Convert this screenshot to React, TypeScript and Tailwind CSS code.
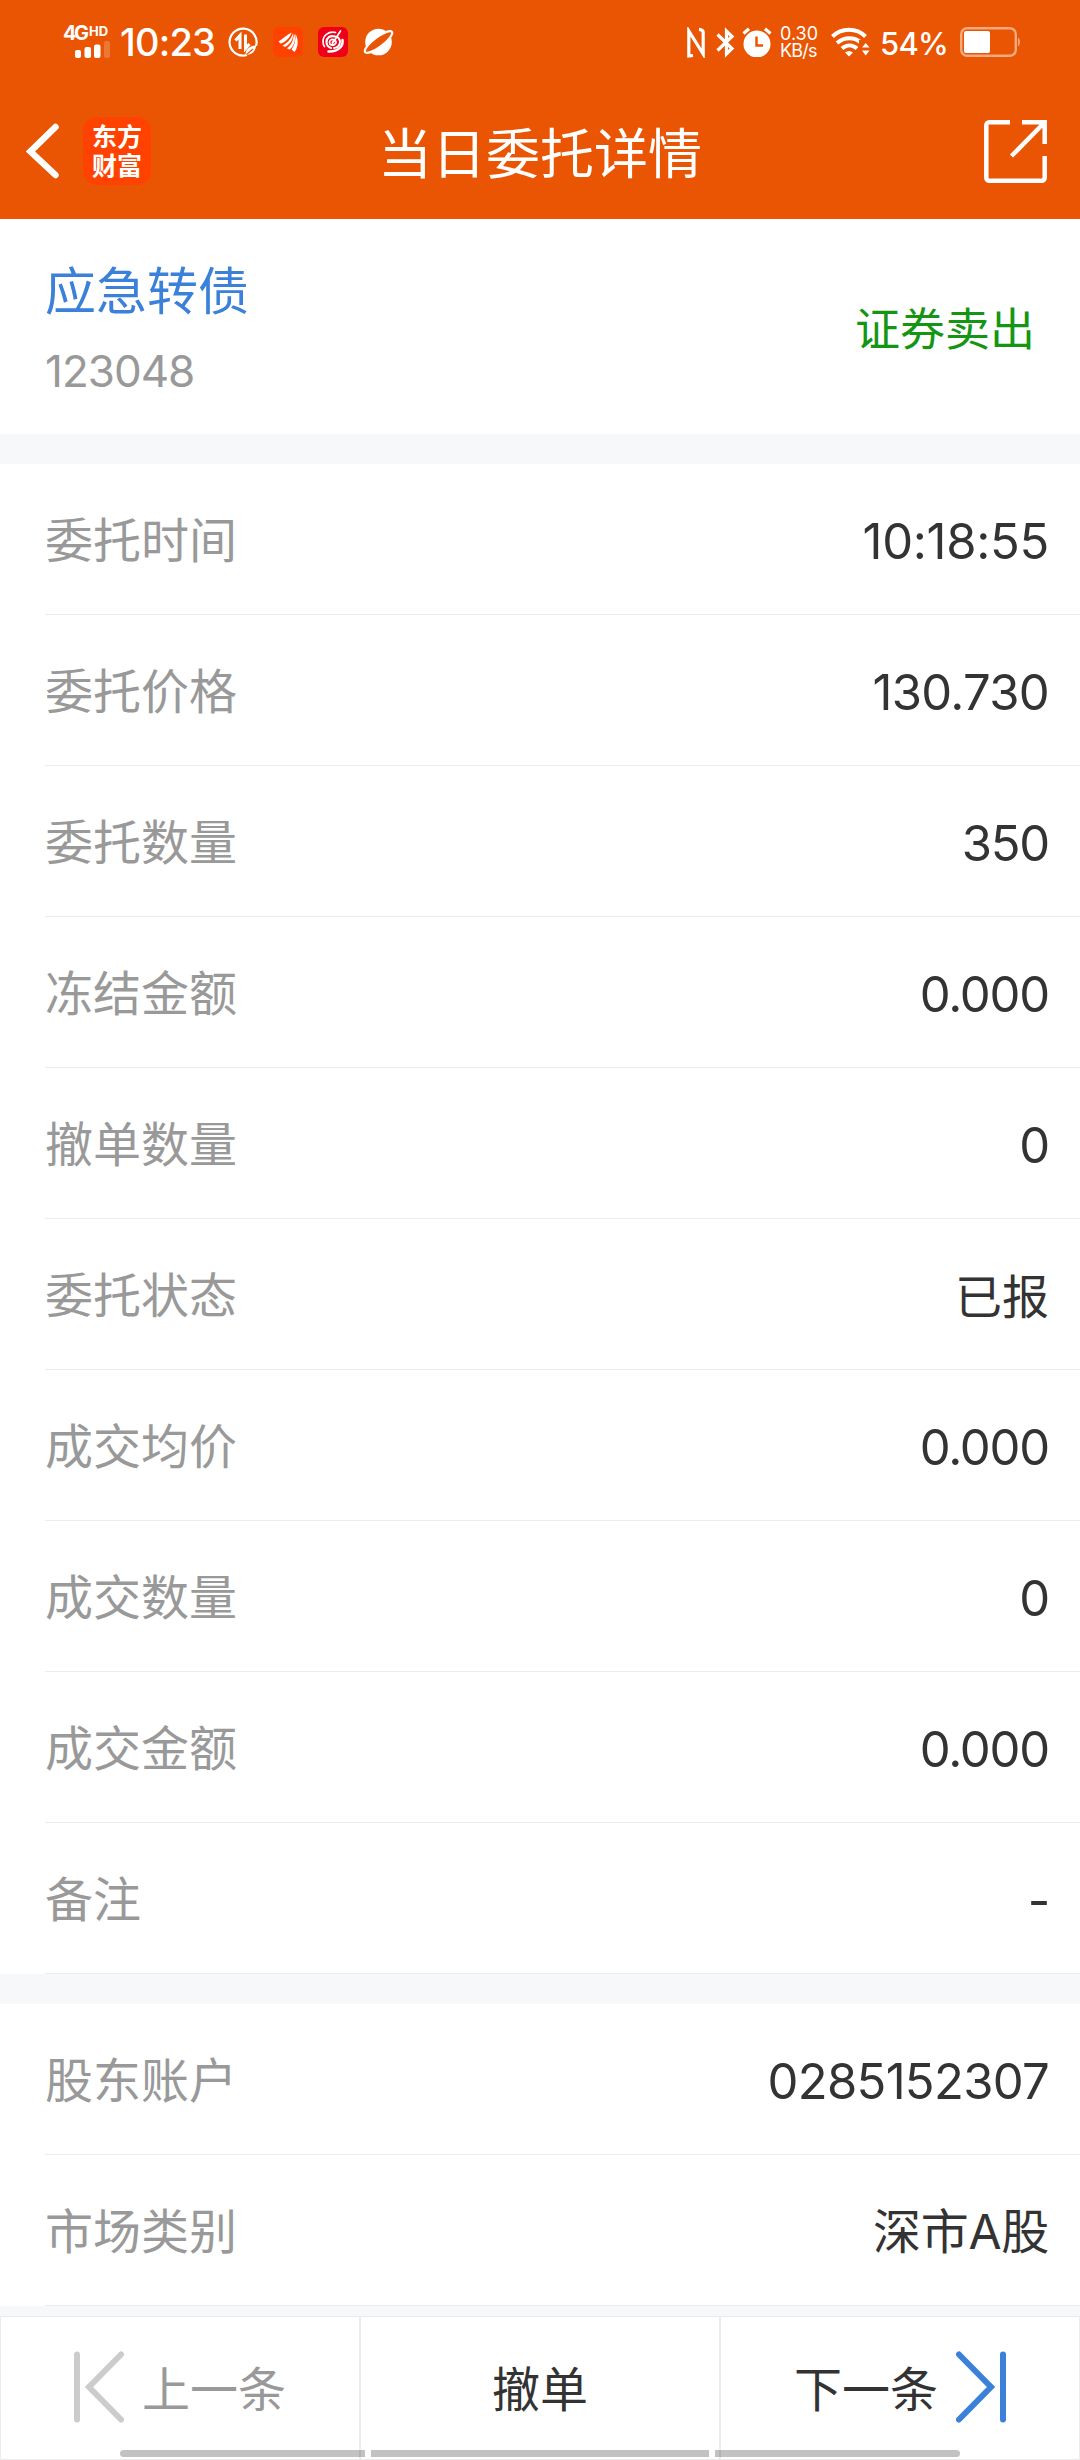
import { clsx } from "clsx";

type Row = { label: string; value: string; valueClass?: string };

const ORDER_ROWS: Row[] = [
  { label: "委托时间", value: "10:18:55", valueClass: "text-[49px] tracking-[-0.3px]" },
  { label: "委托价格", value: "130.730", valueClass: "text-[49px] tracking-[-0.7px]" },
  { label: "委托数量", value: "350" },
  { label: "冻结金额", value: "0.000" },
  { label: "撤单数量", value: "0" },
  { label: "委托状态", value: "已报", valueClass: "text-[47px]" },
  { label: "成交均价", value: "0.000" },
  { label: "成交数量", value: "0" },
  { label: "成交金额", value: "0.000" },
  { label: "备注", value: "-" },
];

const ACCOUNT_ROWS: Row[] = [
  { label: "股东账户", value: "0285152307", valueClass: "text-[49px] tracking-[-0.7px]" },
  { label: "市场类别", value: "深市A股", valueClass: "text-[48px] tracking-[-0.3px]" },
];

function SignalIcon() {
  return (
    <div className="flex w-[48px] flex-col text-white">
      <div className="flex h-[15px] items-start leading-none font-bold">
        <span className="w-[26px] text-[20px] leading-[15px] tracking-[-2.5px]">4G</span>
        <span className="text-[13px] leading-[11px]">HD</span>
      </div>
      <svg width="48" height="17" viewBox="0 0 48 17" fill="#fff">
        <rect x="12" y="9" width="6" height="8" rx="2" />
        <rect x="21.500" y="6" width="6.500" height="11" rx="2" />
        <rect x="31" y="3.500" width="6.500" height="13.500" rx="2" />
        <rect x="41" y="0" width="6" height="17" rx="2" opacity="0.2" />
      </svg>
    </div>
  );
}

function TransferIcon() {
  return (
    <svg width="30" height="30" viewBox="0 0 30 30" fill="none" stroke="#fff" strokeWidth="2.200">
      <path d="M28 19A13.500 13.500 0 1 0 19 28" />
      <path d="M12 22V8.500L7.500 13.500M17.500 7.500v14L21.500 17" strokeWidth="3" />
      <path d="M17.500 28c0-6 4-9 10.500-9.500-.5 6-4 9.500-10.500 9.500z" fill="#fff" stroke="none" />
      <path d="M18.500 27.500 25 22" stroke="#e95502" strokeWidth="1.200" />
    </svg>
  );
}

function EastMoneyIcon() {
  return (
    <svg width="30" height="30" viewBox="0 0 30 30" fill="#fff">
      <rect width="30" height="30" rx="6" fill="#ff4200" />
      <path d="M5.500 14.500C10 12 14 7.500 18.500 5.500 17.500 10 12.500 15.500 7.500 16.500z" />
      <path d="M9.500 18.500c5-2.500 9-7 10.500-12.500 1 5.500-3 11.500-8 14z" />
      <path d="M14 21.500c4.500-3.500 6.500-8.500 7-15 2.500 5.500 0 13-4.500 16z" />
      <path d="M18.500 22.500c3-4 4.300-9 4-15.500 3.500 6 2.500 13.500-1 18z" />
    </svg>
  );
}

function SpiralAppIcon() {
  return (
    <svg width="30" height="30" viewBox="0 0 30 30" fill="none" stroke="#fff" strokeWidth="1.700" strokeLinecap="round">
      <rect width="30" height="30" rx="6" fill="#f00018" stroke="none" />
      <path d="M17.500 5.500C10 4 5 9 5 14.500c0 2 .6 4 1.500 5" />
      <path d="M17 9.500c-5-1.500-8.500 1.500-8.500 5.500 0 3 2 5.500 4.500 6" strokeWidth="2.200" />
      <path d="M15.500 12.500c-3-.5-4 1.500-4 3 0 2.500 3 3.500 5 2 3-2 1-5-1-3.500-1.500 1.200-1 3-1 3M15.500 15l7-11" />
      <path d="M20 10.500c4 4 1.500 10-4 10.500" strokeWidth="2" />
      <path d="M24.500 13c1 6-4 12-14 11.500" strokeWidth="2.500" />
    </svg>
  );
}

function PlanetIcon() {
  return (
    <svg width="31" height="30" viewBox="0 0 31 30" fill="#fff">
      <circle cx="15.500" cy="15" r="13.300" />
      <ellipse
        cx="15.500"
        cy="15"
        rx="16.800"
        ry="4.800"
        transform="rotate(-37 15.500 15)"
        fill="#e95502"
        stroke="#fff"
        strokeWidth="2.200"
      />
    </svg>
  );
}

function NfcIcon() {
  return (
    <svg width="18" height="31" viewBox="0 0 18 31" fill="none" stroke="#fff" strokeWidth="3.200">
      <path d="M6 28.500 1.800 29V4l14.400 23V5.500c0-2-1.200-3-4.200-3.200" />
    </svg>
  );
}

function BluetoothIcon() {
  return (
    <svg width="19" height="31" viewBox="0 0 19 31" fill="none" stroke="#fff" strokeWidth="3.200">
      <path d="M1.500 7.500 16 21.500l-5.500 5.500V4L16 9.500 1.500 23.500" />
    </svg>
  );
}

function AlarmIcon() {
  return (
    <svg width="30" height="30" viewBox="0 0 30 30" fill="none" stroke="#fff">
      <circle cx="15" cy="17" r="13.500" fill="#fff" stroke="none" />
      <path d="M1.500 6.500 7 1.800M28.500 6.500 23 1.800" strokeWidth="3.200" />
      <path d="M14.500 9.500v9H21" stroke="#e95502" strokeWidth="2.500" />
    </svg>
  );
}

function WifiIcon() {
  return (
    <svg width="39" height="30" viewBox="0 0 39 30" fill="none" stroke="#fff" strokeWidth="4">
      <path d="M1.500 9.500c9-9 24-9 33 0" />
      <path d="M6 16c7.500-6.500 17.500-6.500 24.500 0" />
      <path d="M11 21.500c4.500-4 10.500-4 15 0" />
      <path d="M14 25.500c3-2 5.500-2 8 0l-4 4z" fill="#fff" stroke="none" />
      <path d="M28 13h12v17H28z" fill="#e95502" stroke="none" />
      <path d="M31 20.500h7.500L34.700 16zM31 23.500h7.500L34.700 28.500z" fill="#fff" stroke="none" />
    </svg>
  );
}

function BatteryIcon() {
  return (
    <svg width="60" height="30" viewBox="0 0 60 30">
      <rect x="1.200" y="1.200" width="54.600" height="27.600" rx="6" fill="none" stroke="#fff" strokeOpacity="0.5" strokeWidth="2.400" />
      <rect x="4" y="4" width="26" height="22" rx="2" fill="#fff" />
      <path d="M58 10.500c2.500 1 2.500 8 0 9z" fill="#fff" opacity="0.5" />
    </svg>
  );
}

function StatusBar() {
  return (
    <div className="flex h-[84px] items-center justify-between pr-[60px] pl-[63px] text-white">
      <div className="flex items-center">
        <SignalIcon />
        <span className="ml-[9px] w-[108px] text-[38px] leading-none font-medium tracking-[-0.8px]">10:23</span>
        <div className="flex items-center gap-[15px]">
          <TransferIcon />
          <EastMoneyIcon />
          <SpiralAppIcon />
          <PlanetIcon />
        </div>
      </div>
      <div className="flex items-center">
        <NfcIcon />
        <div className="ml-[11px]">
          <BluetoothIcon />
        </div>
        <div className="ml-[7px]">
          <AlarmIcon />
        </div>
        <div className="ml-[8px] flex w-[51px] flex-col text-[18px] leading-[17px] whitespace-nowrap">
          <span>0.30</span>
          <span className="tracking-[-0.8px]">KB/s</span>
        </div>
        <WifiIcon />
        <span className="ml-[10px] w-[80px] pt-[3px] text-[31px] leading-none font-medium tracking-[-0.7px]">54%</span>
        <BatteryIcon />
      </div>
    </div>
  );
}

function TitleBar() {
  return (
    <div className="grid h-[135px] grid-cols-3 items-start">
      <div className="flex items-center pt-[33px] pl-[26px]">
        <svg width="34" height="56" viewBox="0 0 34 56" fill="none" stroke="#fff" strokeWidth="6.500" strokeLinecap="round">
          <path d="M29.500 4 4.500 28.500 29.500 52" />
        </svg>
        <div className="ml-[23px] flex h-[68px] w-[68px] items-center justify-center rounded-[14px] bg-[#ff4200] pb-[2px] font-['Noto_Sans_CJK_SC'] text-[25px] leading-[29px] font-bold text-white">
          <span>
            东方
            <br />
            财富
          </span>
        </div>
      </div>
      <h1 className="-mx-2 pt-[31px] text-center text-[54px] leading-[80px] whitespace-nowrap text-white">当日委托详情</h1>
      <div className="flex justify-end pt-[36px] pr-[33px]">
        <svg width="63" height="63" viewBox="0 0 63 63" fill="none" stroke="#fff" strokeWidth="4.500">
          <path d="M26 2.300H5.300a3 3 0 0 0-3 3v52.400a3 3 0 0 0 3 3h52.400a3 3 0 0 0 3-3V36" />
          <path d="M38 2.300h22.700V24M60 3 27.500 36" />
        </svg>
      </div>
    </div>
  );
}

function DetailRow({ label, value, valueClass = "text-[49px] tracking-[-1.2px]" }: Row) {
  return (
    <div className="flex h-[151px] shrink-0 flex-col">
      <div className="flex h-[150px] items-center justify-between pt-[4px] pr-[31px] pl-[45px]">
        <span className="text-[48px] leading-none text-[#999999]">{label}</span>
        <span className={clsx("leading-none text-[#333333]", valueClass)}>{value}</span>
      </div>
      <div className="ml-[45px] h-px bg-[#ececec]" />
    </div>
  );
}

function StepIcon({ next }: { next?: boolean }) {
  return (
    <svg
      width="50"
      height="72"
      viewBox="0 0 50 72"
      fill="none"
      strokeWidth="6"
      strokeLinecap="round"
      className={clsx(next ? "rotate-180 stroke-[#3b80d9]" : "stroke-[#cccccc]")}
    >
      <path d="M3 3.500v65M47 3.500 15 36 47 68.500" />
    </svg>
  );
}

function BottomBar() {
  return (
    <footer className="relative grid h-[144px] shrink-0 grid-cols-3 bg-white text-[48px] leading-none text-[#333333]">
      <button type="button" className="flex items-center border border-[#ececec] pb-[2px] pl-[73px] text-[#999999]">
        <StepIcon />
        <span className="ml-[18px] pt-[5px]">上一条</span>
      </button>
      <button type="button" className="flex items-center justify-center border border-[#ececec] pt-[3px]">
        撤单
      </button>
      <button type="button" className="flex items-center justify-end border border-[#ececec] pr-[73px] pb-[2px]">
        <span className="mr-[18px] pt-[5px]">下一条</span>
        <StepIcon next />
      </button>
      <div className="absolute bottom-[3px] left-[120px] flex h-[7px] w-[840px] gap-[6px]">
        <div className="w-[245px] rounded-l-full bg-black/24" />
        <div className="flex-1 bg-black/24" />
        <div className="w-[245px] rounded-r-full bg-black/24" />
      </div>
    </footer>
  );
}

export default function App() {
  return (
    <div className="flex h-[2460px] w-[1080px] flex-col overflow-hidden bg-[#f7f8fa] font-['Inter','Noto_Sans_CJK_SC',sans-serif]">
      <header className="h-[219px] shrink-0 bg-[#e95502]">
        <StatusBar />
        <TitleBar />
      </header>

      <section className="flex h-[215px] shrink-0 items-center justify-between bg-white pr-[45px] pl-[45px]">
        <div className="flex flex-col pt-[13px]">
          <span className="text-[51px] leading-[76px] text-[#3b80d9]">应急转债</span>
          <span className="text-[44px] leading-[82px] tracking-[-1px] text-[#999999]">123048</span>
        </div>
        <span className="pt-[5px] text-[45px] leading-none text-[#149614]">证券卖出</span>
      </section>

      <section className="mt-[30px] flex shrink-0 flex-col bg-white">
        {ORDER_ROWS.map((row) => (
          <DetailRow key={row.label} {...row} />
        ))}
      </section>

      <section className="mt-[30px] mb-[10px] flex shrink-0 flex-col bg-white">
        {ACCOUNT_ROWS.map((row) => (
          <DetailRow key={row.label} {...row} />
        ))}
      </section>

      <BottomBar />
    </div>
  );
}
